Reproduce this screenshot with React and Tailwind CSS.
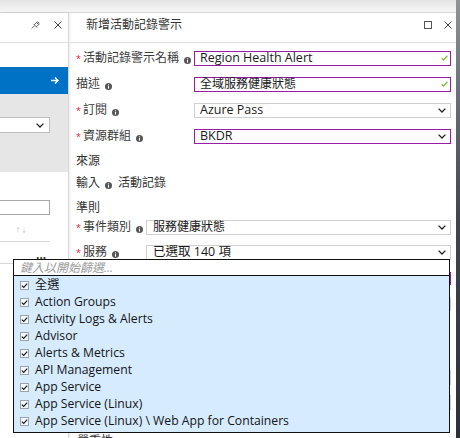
import React from "react";

const Info = () => (
  <svg width="7" height="7" viewBox="0 0 8 8" className="shrink-0 mt-[5px]">
    <circle cx="4" cy="4" r="4" fill="#555" />
    <rect x="3.4" y="3.4" width="1.2" height="3" fill="#fff" />
    <circle cx="4" cy="2.1" r="0.75" fill="#fff" />
  </svg>
);

const Chevron = () => (
  <svg width="8" height="5" viewBox="0 0 8 5" className="shrink-0">
    <path d="M0.6 0.6 L4 4 L7.4 0.6" stroke="#222" strokeWidth="1.3" fill="none" />
  </svg>
);

const Close = ({ size = 8, color = "#444" }) => (
  <svg width={size} height={size} viewBox="0 0 8 8">
    <path d="M0.5 0.5 L7.5 7.5 M7.5 0.5 L0.5 7.5" stroke={color} strokeWidth="1" fill="none" />
  </svg>
);

const Pin = () => (
  <svg width="10" height="9" viewBox="0 0 10 9">
    <path
      d="M0.8 8.4 L3.6 5.6 M2.4 3.9 L6.2 7.7 M3.3 4.8 L5.6 2.5 L7.6 4.5 L5.3 6.8 M5.2 1.9 L8.1 4.8 M6.6 1.5 L8.6 3.5"
      stroke="#555"
      strokeWidth="0.9"
      fill="none"
    />
  </svg>
);

const Req = () => <span className="w-[7px] shrink-0 text-[9px] leading-none text-[#e8112d]">*</span>;

const Label = ({ req, text, width = "w-[118px]" }) => (
  <div className={`flex ${width} shrink-0 items-center gap-[5px]`}>
    <div className="flex items-center">
      {req && <Req />}
      <span className="text-[12px] text-[#3a3a3a]">{text}</span>
    </div>
    <Info />
  </div>
);

const CheckBox = () => (
  <svg width="9" height="9" viewBox="0 0 9 9" className="shrink-0">
    <rect x="0.5" y="0.5" width="8" height="8" fill="#f4f9fd" stroke="#9aa3ab" />
    <path d="M1.8 4.6 L3.7 6.4 L7.2 2.6" stroke="#1a1a1a" strokeWidth="1.2" fill="none" />
  </svg>
);

const services = [
  "全選",
  "Action Groups",
  "Activity Logs & Alerts",
  "Advisor",
  "Alerts & Metrics",
  "API Management",
  "App Service",
  "App Service (Linux)",
  "App Service (Linux) \\ Web App for Containers",
];

export default function App() {
  return (
    <div className="relative h-[438px] w-[460px] overflow-hidden bg-white font-['Open_Sans','Noto_Sans_CJK_TC',sans-serif] text-[12px] text-[#333]">
      <div className="flex h-full">
        <div className="flex flex-1 flex-col">
          <div className="h-[13px] shrink-0 border-b border-[#d6d6d6] bg-gradient-to-b from-[#e3e3e3] to-[#f7f7f7]" />
          <div className="flex flex-1">
            {/* left blade */}
            <div className="flex w-[69px] shrink-0 flex-col border-r border-[#d8d8d8] shadow-[1px_0_3px_rgba(0,0,0,0.08)]">
              <div className="flex h-[30px] items-center justify-end gap-[13px] border-b border-[#e2e2e2] pb-[6px] pr-[6px]">
                <Pin />
                <Close />
              </div>
              <div className="h-[24px]" />
              <div className="flex h-[27px] items-center justify-end bg-[#0072c6] pr-[9px]">
                <svg width="8" height="7" viewBox="0 0 8 7">
                  <path d="M0 3.5 H7 M4 0.6 L7 3.5 L4 6.4" stroke="#fff" strokeWidth="1.4" fill="none" />
                </svg>
              </div>
              <div className="h-[78px] bg-[#e6e6e6] pt-[23px]">
                <div className="flex h-[16px] w-[50px] items-center justify-end border border-l-0 border-[#bdbdbd] bg-white pr-[5px]">
                  <Chevron />
                </div>
              </div>
              <div className="mt-[28px] h-[15px] w-[50px] border border-l-0 border-[#a8a8a8] bg-white" />
              <div className="mt-[12px] pl-[15px] text-[6px] leading-none text-[#c4c4c4]">↑↓</div>
              <div className="mt-[8px] w-[50px] border-b border-[#d8d8d8]" />
              <div className="mt-[8px] pl-[36px] text-[12px] font-bold leading-[10px] text-[#333]">...</div>
              <div className="mt-[3px] border-b border-[#d8d8d8]" />
            </div>

            {/* right blade */}
            <div className="flex flex-1 flex-col">
              <div className="flex h-[30px] shrink-0 items-center justify-between border-b border-[#e2e2e2] pb-[6px] pl-[17px] pr-[4px]">
                <span className="text-[12px] text-[#333]">新增活動記錄警示</span>
                <div className="flex items-center gap-[12px]">
                  <div className="h-[8px] w-[8px] border border-[#555]" />
                  <Close />
                </div>
              </div>
              <div className="flex flex-col pl-[7px] pr-[5px] pt-[2px]">
                <div className="flex h-[26px] items-center">
                  <Label req text="活動記錄警示名稱" />
                  <div className="flex h-[15px] flex-1 items-center justify-between border border-[#9c1aa8] pl-[5px] pr-[2px]">
                    <span className="text-[12.5px] text-[#1b1b1b]">Region Health Alert</span>
                    <svg width="7" height="6" viewBox="0 0 7 6">
                      <path d="M0.6 3.2 L2.6 5 L6.4 0.8" stroke="#7ac142" strokeWidth="1.3" fill="none" />
                    </svg>
                  </div>
                </div>
                <div className="flex h-[26px] items-center">
                  <Label text="描述" />
                  <div className="flex h-[15px] flex-1 items-center justify-between border border-[#9c1aa8] pl-[5px] pr-[2px]">
                    <span className="text-[12px] text-[#1b1b1b]">全域服務健康狀態</span>
                    <svg width="7" height="6" viewBox="0 0 7 6">
                      <path d="M0.6 3.2 L2.6 5 L6.4 0.8" stroke="#7ac142" strokeWidth="1.3" fill="none" />
                    </svg>
                  </div>
                </div>
                <div className="flex h-[26px] items-center">
                  <Label req text="訂閱" />
                  <div className="flex h-[15px] flex-1 items-center justify-between border border-[#cfcfcf] pl-[5px] pr-[4px]">
                    <span className="text-[12.5px] text-[#1b1b1b]">Azure Pass</span>
                    <Chevron />
                  </div>
                </div>
                <div className="flex h-[26px] items-center">
                  <Label req text="資源群組" />
                  <div className="flex h-[15px] flex-1 items-center justify-between border border-[#9c1aa8] pl-[5px] pr-[4px]">
                    <span className="text-[12.5px] text-[#1b1b1b]">BKDR</span>
                    <Chevron />
                  </div>
                </div>
                <div className="flex h-[24px] items-center text-[12px] text-[#333]">來源</div>
                <div className="flex h-[20px] items-center gap-[5px] text-[12px] text-[#333]">
                  <span>輸入</span>
                  <Info />
                  <span className="ml-[1px]">活動記錄</span>
                </div>
                <div className="mt-[3px] flex h-[23px] items-center text-[12px] text-[#333]">準則</div>
                <div className="flex h-[16px] items-center">
                  <Label req text="事件類別" width="w-[70px]" />
                  <div className="flex h-[15px] flex-1 items-center justify-between border border-[#d0d0d0] pl-[6px] pr-[4px]">
                    <span className="text-[12px] text-[#1b1b1b]">服務健康狀態</span>
                    <Chevron />
                  </div>
                </div>
                <div className="mt-[9px] flex h-[16px] items-center">
                  <Label req text="服務" width="w-[70px]" />
                  <div className="flex h-[15px] flex-1 items-center justify-between border border-[#d0d0d0] pl-[6px] pr-[4px]">
                    <span className="text-[12.5px] text-[#1b1b1b]">已選取 140 項</span>
                    <Chevron />
                  </div>
                </div>
                {/* fields hidden behind the open list */}
                <div className="ml-[118px] mt-[12px] h-[13px] border border-[#9c1aa8]" />
                <div className="ml-[118px] mt-[12px] h-[14px] border border-[#d0d0d0]" />
                <div className="ml-[118px] mt-[59px] h-[15px] border border-[#d0d0d0]" />
                <div className="ml-[118px] mt-[10px] h-[15px] border border-[#d0d0d0]" />
                <div className="mt-[22px] pl-[1px] text-[12px] text-[#333]">嚴重性</div>
              </div>
            </div>
          </div>
        </div>
        <div className="w-[4px] shrink-0 bg-gradient-to-b from-[#8d939b] via-[#3f464f] to-[#2c3138]" />
      </div>

      {/* open service list */}
      <div className="absolute left-[13px] top-[259px] flex h-[174px] w-[437px] flex-col border border-[#111] bg-white">
        <div className="flex h-[16px] shrink-0 items-center border-b border-[#111] pl-[6px]">
          <span className="text-[12px] italic text-[#9a9a9a]">鍵入以開始篩選...</span>
        </div>
        <div className="flex flex-1 flex-col bg-[#d6ecfe] pt-[1px]">
          {services.map((s) => (
            <div key={s} className="flex h-[17px] shrink-0 items-center gap-[6px] pl-[6px]">
              <CheckBox />
              <span className="whitespace-nowrap text-[12.2px] text-[#141414]">{s}</span>
            </div>
          ))}
        </div>
      </div>
    </div>
  );
}
